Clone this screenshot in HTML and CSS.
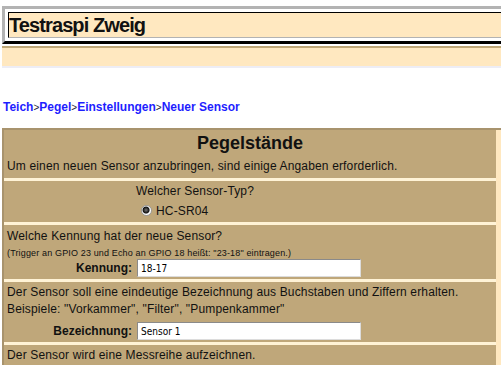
FILE: index.html
```html
<!DOCTYPE html>
<html lang="de">

<head>
    <meta charset="UTF-8">
    <meta name="viewport" content="width=device-width, initial-scale=1.0">
    <title>Neuer Sensor</title>
    <link rel="stylesheet" href="styles.css">
</head>

<body>
    <div class="header">
        <h1 class="site-title">Testraspi Zweig</h1>
    </div>
    <div class="navbar"></div>

    <div class="crumbs">
        <a href="#">Teich</a><span class="sep">&gt;</span><a href="#">Pegel</a><span class="sep">&gt;</span><a href="#">Einstellungen</a><span class="sep">&gt;</span><a href="#">Neuer Sensor</a>
    </div>

    <div class="main">
        <form class="panel">
            <div class="row row-head">
                <h2>Pegelstände</h2>
                <p>Um einen neuen Sensor anzubringen, sind einige Angaben erforderlich.</p>
            </div>

            <div class="row row-type">
                <div class="field">
                    <span></span>
                    <div>
                        <p>Welcher Sensor-Typ?</p>
                        <div class="radio"><input type="radio" name="typ" id="hcsr04" value="hcsr04" checked><span>HC-SR04</span></div>
                    </div>
                </div>
            </div>

            <div class="row row-id">
                <p>Welche Kennung hat der neue Sensor?</p>
                <p class="hint">(Trigger an GPIO 23 und Echo an GPIO 18 heißt: "23-18" eintragen.)</p>
                <div class="field">
                    <label for="kennung">Kennung:</label>
                    <input type="text" id="kennung" value="18-17">
                </div>
            </div>

            <div class="row row-name">
                <p>Der Sensor soll eine eindeutige Bezeichnung aus Buchstaben und Ziffern erhalten.</p>
                <p>Beispiele: "Vorkammer", "Filter", "Pumpenkammer"</p>
                <div class="field">
                    <label for="bezeichnung">Bezeichnung:</label>
                    <input type="text" id="bezeichnung" value="Sensor 1">
                </div>
            </div>

            <div class="row">
                <p>Der Sensor wird eine Messreihe aufzeichnen.</p>
            </div>
        </form>
    </div>
</body>

</html>
```

FILE: styles.css
```css
body {
    margin: 0;
    font-family: "Liberation Sans", Arial, sans-serif;
    color: #111;
    background: #fff;
    overflow: hidden;
}

/* Site header */
.header {
    width: 600px;
    margin: 6px 0 0 2px;
    padding: 3px;
    border: 3px solid;
    border-color: #b3b3b3 #000 #000 #b3b3b3;
}

.site-title {
    margin: 0;
    height: 24px;
    line-height: 24px;
    font-size: 20px;
    letter-spacing: -0.9px;
    background: #ffe8c0;
    border: 1px solid;
    border-color: #000 #b3b3b3 #b3b3b3 #000;
}

.navbar {
    margin: 2px 0 0 2px;
    height: 18px;
    background: #ffe8c0;
    border-top: 2px solid #c0a878;
    border-bottom: 2px solid #ededf5;
}

/* Breadcrumb */
.crumbs {
    margin: 32px 0 0 3px;
    line-height: 14px;
    font-size: 12px;
    font-weight: bold;
}

.crumbs a {
    color: #1e1eff;
    text-decoration: none;
}

.crumbs .sep {
    font-size: 10px;
    font-weight: normal;
    color: #223;
}

/* Main panel */
.main {
    margin: 13px 0 0 2px;
    background: #ffe8c0;
    border-top: 2px solid #a8936d;
    border-left: 2px solid #a8936d;
}

.panel {
    width: 492px;
    margin: 0;
    background: #fff3d6;
    font-size: 12px;
    line-height: 17px;
    letter-spacing: 0.15px;
}

.row {
    background: #bfa77a;
    padding: 2px 3px;
    margin-bottom: 3px;
}

.row p {
    margin: 0;
}

.row-head {
    padding: 1px 3px 3px;
}

.row-head h2 {
    margin: 0;
    line-height: 24px;
    font-size: 18px;
    letter-spacing: 0;
    text-align: center;
}

.row-head p {
    margin-top: 3px;
}

.radio {
    margin-top: 3px;
}

.radio input {
    appearance: none;
    width: 11px;
    height: 11px;
    margin: 0 4px 0 5px;
    vertical-align: -1px;
    border: 1px solid #9a9a9a;
    border-radius: 50%;
    background: radial-gradient(circle at 45% 45%, #777 0, #111 3px, #fff 4px);
}

.row-id {
    padding-top: 3px;
    padding-bottom: 1px;
}

.row-id .hint {
    margin-top: 2px;
    line-height: 12px;
    font-size: 9px;
}

.row-name {
    padding-bottom: 1px;
}

.field {
    display: grid;
    grid-template-columns: 125px 1fr;
    column-gap: 4px;
    align-items: center;
    margin-top: 4px;
}

.row-id .field,
.row-type .field {
    margin-top: 0;
}

.field label {
    text-align: right;
    font-weight: bold;
    letter-spacing: 0;
}

.field input[type="text"] {
    box-sizing: border-box;
    width: 224px;
    height: 18px;
    margin: 0 0 1px 1px;
    padding: 0 3px;
    font-family: "Liberation Sans Narrow", "DejaVu Sans Condensed", "Liberation Sans", sans-serif;
    font-size: 10px;
    color: #000;
    background: #fff;
    border: 1px solid;
    border-color: #8a8a8a #dcdcdc #dcdcdc #8a8a8a;
}
```
